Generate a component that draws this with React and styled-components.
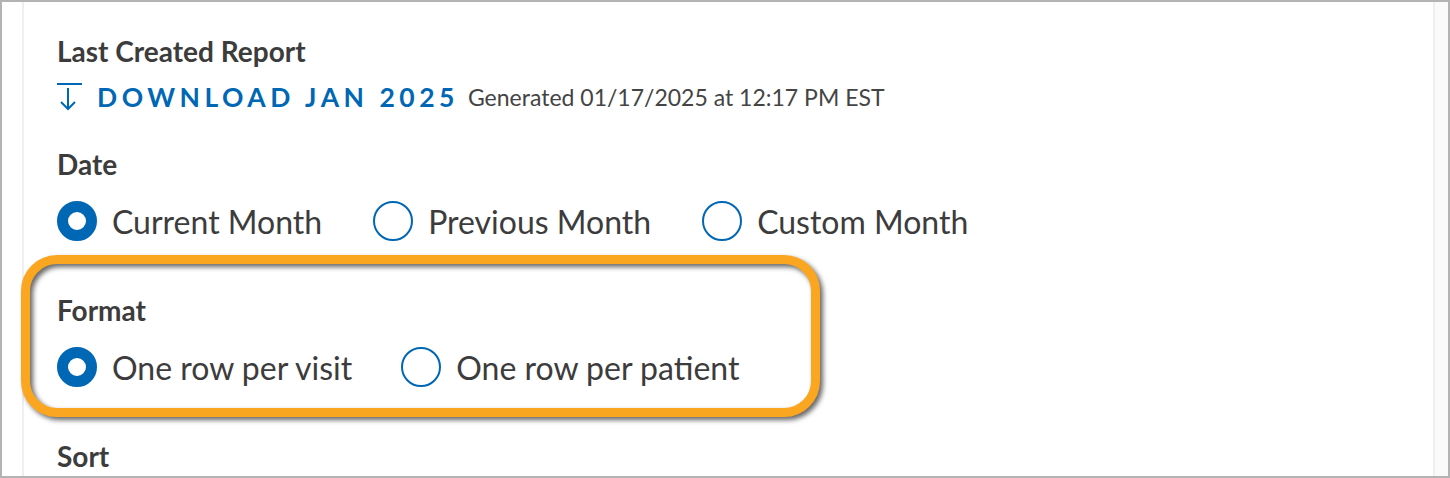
import React from "react";
import styled, { createGlobalStyle } from "styled-components";

const GlobalStyle = createGlobalStyle`
  html, body {
    margin: 0;
    padding: 0;
    background: #ffffff;
  }
  body {
    font-family: Lato, "Noto Sans", sans-serif;
    color: #3c3c3c;
  }
`;

const Frame = styled.div`
  position: relative;
  box-sizing: border-box;
  width: 1450px;
  height: 478px;
  border: 2px solid #b3b3b3;
  background: #ffffff;
  display: flex;
  overflow: hidden;
`;

const Panel = styled.div`
  box-sizing: border-box;
  width: 1413px;
  margin-left: 20px;
  border-left: 2px solid #efefef;
  border-right: 2px solid #efefef;
  padding: 34px 0 0 33px;
  display: flex;
  flex-direction: column;
`;

const Gutter = styled.div`
  flex: 1;
  background: #fafafa;
`;

const Group = styled.div`
  display: flex;
  flex-direction: column;
  gap: ${(p) => p.$gap || 22}px;
  margin-bottom: ${(p) => p.$after || 54}px;
`;

const Label = styled.div`
  font-size: 28px;
  font-weight: 700;
  line-height: 30px;
  color: #3c3c3c;
`;

const DownloadRow = styled.div`
  display: flex;
  align-items: center;
  height: 36px;
`;

const DownloadLink = styled.a`
  display: flex;
  align-items: center;
  color: #0067b4;
  font-size: 26.5px;
  font-weight: 700;
  letter-spacing: 4.5px;
  text-decoration: none;
  cursor: pointer;
  svg {
    margin-right: 14px;
    flex-shrink: 0;
  }
`;

const Generated = styled.span`
  margin-left: 9px;
  font-size: 23px;
  color: #444444;
`;

const RadioRow = styled.div`
  display: flex;
  align-items: center;
  gap: ${(p) => p.$gap || 49}px;
  height: 40px;
`;

const Option = styled.label`
  display: flex;
  align-items: center;
  gap: 15px;
  font-size: 32px;
  color: #3c3c3c;
  cursor: pointer;
`;

const Dot = styled.span`
  box-sizing: border-box;
  width: 40px;
  height: 40px;
  border-radius: 50%;
  border: ${(p) => (p.$on ? "11px" : "2px")} solid #0067b4;
  background: #ffffff;
`;

const Highlight = styled.div`
  position: absolute;
  left: 19px;
  top: 253px;
  width: 799px;
  height: 162px;
  box-sizing: border-box;
  border: 9px solid #fba620;
  border-radius: 36px;
  filter: drop-shadow(3px 3px 2.5px rgba(0, 0, 0, 0.6));
  pointer-events: none;
`;

const DownloadIcon = () => (
  <svg width="26" height="28" viewBox="0 0 26 28" fill="none">
    <line x1="0" y1="1" x2="25" y2="1" stroke="#0067b4" strokeWidth="2" />
    <line x1="11" y1="5" x2="11" y2="26" stroke="#0067b4" strokeWidth="2" />
    <polyline
      points="4,19 11,26 18,19"
      stroke="#0067b4"
      strokeWidth="2"
      fill="none"
    />
  </svg>
);

const RadioGroup = ({ options, selected, gap }) => (
  <RadioRow $gap={gap}>
    {options.map((o) => (
      <Option key={o}>
        <Dot $on={o === selected} />
        {o}
      </Option>
    ))}
  </RadioRow>
);

export default function App() {
  return (
    <>
      <GlobalStyle />
      <Frame>
        <Panel>
          <Group $gap={13} $after={34}>
            <Label>Last Created Report</Label>
            <DownloadRow>
              <DownloadLink>
                <DownloadIcon />
                DOWNLOAD JAN 2025
              </DownloadLink>
              <Generated>Generated 01/17/2025 at 12:17 PM EST</Generated>
            </DownloadRow>
          </Group>
          <Group>
            <Label>Date</Label>
            <RadioGroup
              options={["Current Month", "Previous Month", "Custom Month"]}
              selected="Current Month"
              gap={51}
            />
          </Group>
          <Group>
            <Label>Format</Label>
            <RadioGroup
              options={["One row per visit", "One row per patient"]}
              selected="One row per visit"
            />
          </Group>
          <Group>
            <Label>Sort</Label>
          </Group>
        </Panel>
        <Gutter />
        <Highlight />
      </Frame>
    </>
  );
}
